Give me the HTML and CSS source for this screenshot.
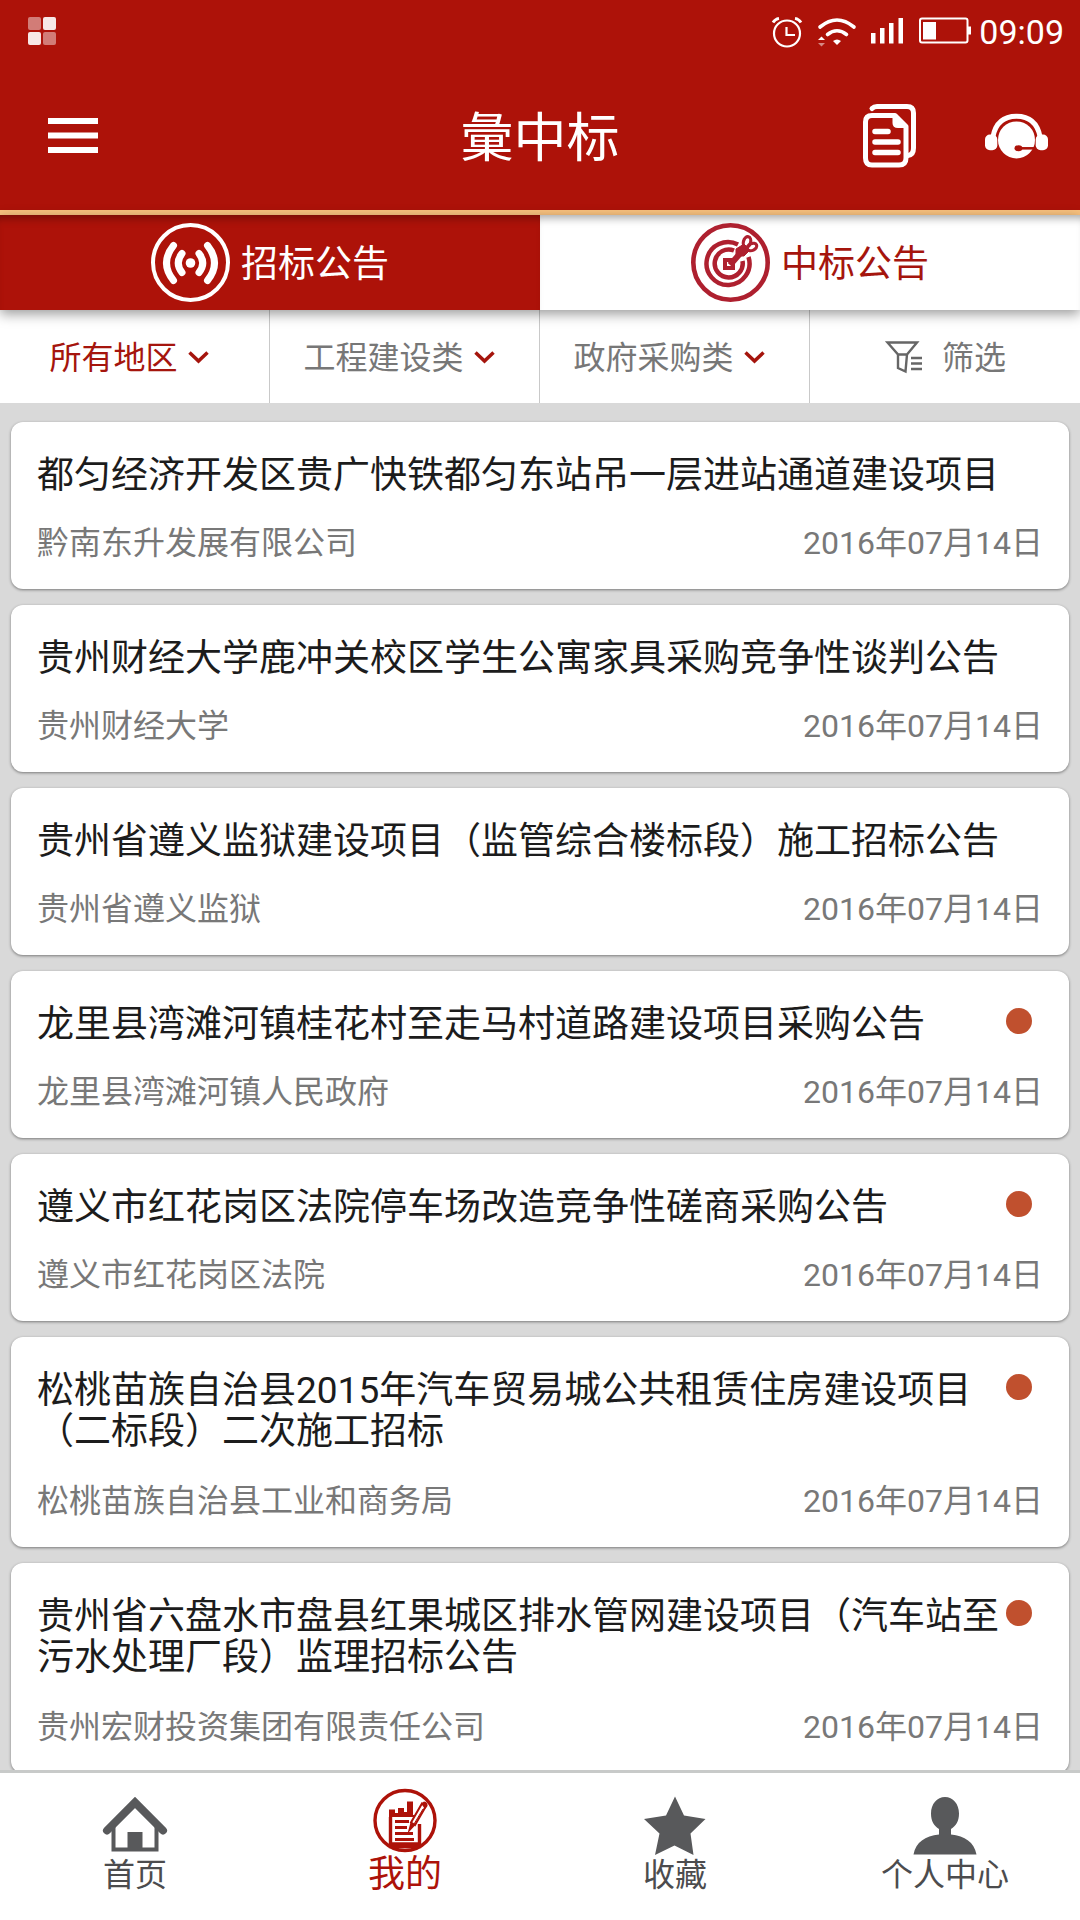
FILE: index.html
```html
<!DOCTYPE html>
<html lang="zh-CN">
<head>
  <meta charset="UTF-8">
  <meta name="viewport" content="width=device-width, initial-scale=1.0">
  <title>彙中标</title>
  <link rel="stylesheet" href="styles.css">
</head>
<body>
  <header class="header">
    <div class="status-bar">
      <svg class="status-app" width="28" height="28" viewBox="0 0 28 28" fill="#fff">
        <rect width="13" height="13" rx="2" opacity=".45"/>
        <rect x="15" width="13" height="13" rx="2" opacity=".9"/>
        <rect y="15" width="13" height="13" rx="2" opacity=".9"/>
        <rect x="15" y="15" width="13" height="13" rx="2" opacity=".45"/>
      </svg>
      <div class="status-icons">
        <svg width="30" height="31" viewBox="0 0 30 31" fill="none" stroke="#fff" stroke-width="2.200">
          <circle cx="15" cy="16.500" r="13"/>
          <path d="M14.500 10v8H23"/>
          <path d="M1 5.500Q3 2 7 1.300M29 5.500Q27 2 23 1.300" stroke-width="2.800"/>
        </svg>
        <svg width="38" height="31" viewBox="0 0 38 31" fill="none" stroke="#fff">
          <path d="M2 10Q19-4 36 10" stroke-width="3.600" stroke-linecap="round"/>
          <path d="M9.500 17.500Q19 10 28.500 17.500" stroke-width="3.600" stroke-linecap="round"/>
          <path d="M15 24q4-3 8 0l-4 4z" fill="#fff" stroke="none"/>
          <path d="M0 23l3.500-3.500L7 23z" fill="#fff" stroke="none"/>
          <path d="M0 26h7l-3.500 3.500z" fill="#fff" stroke="none" opacity=".5"/>
        </svg>
        <svg width="33" height="27" viewBox="0 0 33 27" fill="#fff">
          <path d="M0 16h4.500v10.500H0zM9 11h4.500v15.500H9zM18 6h4.500v20.500H18zM27.500 1H32v25.500h-4.500z"/>
        </svg>
        <svg width="52" height="27" viewBox="0 0 52 27">
          <rect x="1" y="1.500" width="47.500" height="24" rx="2" fill="none" stroke="#fff" stroke-width="2"/>
          <rect x="4" y="5" width="13" height="17.500" fill="#fff"/>
          <path d="M49 9.500h3v8h-3z" fill="#fff"/>
        </svg>
        <span class="status-time">09:09</span>
      </div>
    </div>
    <div class="title-bar">
      <svg class="menu" width="50" height="35" viewBox="0 0 50 35" fill="#fff">
        <path d="M0 0h50v6H0zM0 14.500h50v6H0zM0 29h50v6H0z"/>
      </svg>
      <h1>彙中标</h1>
      <div class="title-actions">
        <svg width="54" height="64" viewBox="0 0 54 64" fill="none" stroke="#fff" stroke-linecap="round" stroke-linejoin="round">
          <path d="M9 4.500Q11 2.500 14 2.500H44Q50.500 2.500 50.500 9V44Q50.500 51 45 51.500" stroke-width="5"/>
          <path d="M9 11.500H32L43 22.500V54Q43 61 36 61H9Q2.500 61 2.500 54V18Q2.500 11.500 9 11.500Z" stroke-width="5"/>
          <path d="M31 11.500V19Q31 22.500 35 22.500H43Z" fill="#fff" stroke-width="3"/>
          <path d="M12 27.500H25M12 38H35M12 48.500H35" stroke-width="5.500"/>
        </svg>
        <svg width="63" height="47" viewBox="0 0 64 47">
          <path d="M8 24Q12 3 32 3T56 24" fill="none" stroke="#fff" stroke-width="5"/>
          <circle cx="32" cy="27" r="18.800" fill="#fff"/>
          <rect x="0" y="21.500" width="12.500" height="16" rx="5" fill="#fff"/>
          <rect x="51.500" y="21.500" width="12.500" height="16" rx="5" fill="#fff"/>
          <path d="M35 35.500H52" stroke="#ad1209" stroke-width="2.600"/>
          <ellipse cx="34" cy="35.500" rx="4" ry="3" fill="#ad1209"/>
        </svg>
      </div>
    </div>
  </header>

  <nav class="tabs">
    <a class="tab active">
      <svg width="79" height="79" viewBox="0 0 79 79" fill="none" stroke="#fff" stroke-linecap="round">
        <circle cx="39.500" cy="39.500" r="37.500" stroke-width="4"/>
        <circle cx="39.500" cy="40" r="4.800" fill="#fff" stroke="none"/>
        <path d="M31 30.500Q23.500 40 31 49.500M48 30.500Q55.500 40 48 49.500" stroke-width="7"/>
        <path d="M22.500 22.500Q8.500 40 22.500 57.500M56.500 22.500Q70.500 40 56.500 57.500" stroke-width="7"/>
      </svg>
      <span>招标公告</span>
    </a>
    <a class="tab">
      <svg width="79" height="79" viewBox="0 0 79 79" fill="none" stroke="#ae202f">
        <circle cx="39.500" cy="39.500" r="37.200" stroke-width="4.600"/>
        <path d="M47 21.500A21.500 21.500 0 1 0 57.500 34" stroke-width="4.500"/>
        <path d="M43 27.500A14 14 0 1 0 51.500 38" stroke-width="4.500"/>
        <path d="M34 37H42V45H34Z" stroke-width="4"/>
        <path d="M39 42L53 26" stroke-width="6"/>
        <path d="M45 26L53 21L59 27L53 33L45 33Z" fill="#ae202f" stroke-width="1"/>
        <ellipse cx="56" cy="19" rx="3.600" ry="5.500" transform="rotate(15 56 19)" stroke-width="3.200"/>
        <ellipse cx="61" cy="24" rx="5" ry="3.400" transform="rotate(-25 61 24)" stroke-width="3.200"/>
      </svg>
      <span>中标公告</span>
    </a>
  </nav>

  <div class="filters">
    <div class="filter selected"><span>所有地区</span><svg class="arrow" width="42" height="14" viewBox="0 0 42 14"><path d="M11.500 2.500L20.500 11L29.500 2.500"/></svg></div>
    <div class="filter"><span>工程建设类</span><svg class="arrow" width="42" height="14" viewBox="0 0 42 14"><path d="M11.500 2.500L20.500 11L29.500 2.500"/></svg></div>
    <div class="filter"><span>政府采购类</span><svg class="arrow" width="42" height="14" viewBox="0 0 42 14"><path d="M11.500 2.500L20.500 11L29.500 2.500"/></svg></div>
    <div class="filter">
      <svg class="funnel" width="37" height="32" viewBox="0 0 37 32" fill="none" stroke="#666" stroke-width="2.400">
        <path d="M1.500 1.500H31L21 13.500L19.500 30.500L12 27V13.500Z M12 13.500H21"/>
        <path d="M25 17H36M25 22.500H36M25 28H36"/>
      </svg>
      <span>筛选</span>
    </div>
  </div>

  <main class="list">
    <article class="card">
      <h2>都匀经济开发区贵广快铁都匀东站吊一层进站通道建设项目</h2>
      <div class="meta"><span>黔南东升发展有限公司</span><time>2016年07月14日</time></div>
    </article>
    <article class="card">
      <h2>贵州财经大学鹿冲关校区学生公寓家具采购竞争性谈判公告</h2>
      <div class="meta"><span>贵州财经大学</span><time>2016年07月14日</time></div>
    </article>
    <article class="card">
      <h2>贵州省遵义监狱建设项目（监管综合楼标段）施工招标公告</h2>
      <div class="meta"><span>贵州省遵义监狱</span><time>2016年07月14日</time></div>
    </article>
    <article class="card unread">
      <h2>龙里县湾滩河镇桂花村至走马村道路建设项目采购公告</h2>
      <div class="meta"><span>龙里县湾滩河镇人民政府</span><time>2016年07月14日</time></div>
    </article>
    <article class="card unread">
      <h2>遵义市红花岗区法院停车场改造竞争性磋商采购公告</h2>
      <div class="meta"><span>遵义市红花岗区法院</span><time>2016年07月14日</time></div>
    </article>
    <article class="card unread two-lines">
      <h2>松桃苗族自治县2015年汽车贸易城公共租赁住房建设项目<br>（二标段）二次施工招标</h2>
      <div class="meta"><span>松桃苗族自治县工业和商务局</span><time>2016年07月14日</time></div>
    </article>
    <article class="card unread two-lines">
      <h2>贵州省六盘水市盘县红果城区排水管网建设项目（汽车站至<br>污水处理厂段）监理招标公告</h2>
      <div class="meta"><span>贵州宏财投资集团有限责任公司</span><time>2016年07月14日</time></div>
    </article>
  </main>

  <footer class="bottom-nav">
    <a class="nav-item">
      <svg width="64" height="66" viewBox="0 0 64 66">
        <path d="M10.500 40V62.500H53.500V40" fill="none" stroke="#58595b" stroke-width="4"/>
        <path d="M4 43.500L32 15.500L60 43.500" fill="none" stroke="#58595b" stroke-width="8" stroke-linecap="round"/>
        <path d="M24.500 45h15v18h-15z" fill="#58595b"/>
      </svg>
      <span>首页</span>
    </a>
    <a class="nav-item current">
      <svg width="64" height="66" viewBox="0 0 64 66" fill="none" stroke="#ad1209">
        <circle cx="32" cy="33.500" r="30" stroke-width="3.400"/>
        <path d="M17.500 30V59.500H46.500V37M18 57H46" stroke-width="3.400"/>
        <path d="M16 30V22.500H22V26H25V21H31V25H34V14.500H40V28H44V30Z" fill="#ad1209" stroke="none"/>
        <path d="M22 34.500H36M22 40.500H34M22 46.500H40M22 52.500H41" stroke-width="2.800"/>
        <path d="M49 16.500L53 19L42 38L38 35.500Z" fill="#fff" stroke-width="2"/>
        <path d="M48 16.500L51 14.500Q55 15 54.500 19L52 22ZM37.500 35.500L42 38.500L34.500 46.500Z" fill="#ad1209" stroke="none"/>
        <path d="M50 22L41 37" stroke-width="1"/>
      </svg>
      <span>我的</span>
    </a>
    <a class="nav-item">
      <svg width="64" height="66" viewBox="0 0 64 66" fill="#58595b">
        <path d="M32 9.500L41 28.500L62.500 32L47.500 46.500L50.500 68L31.500 58.500L12 68L16.500 46.500L1 32L23 28.500Z"/>
      </svg>
      <span>收藏</span>
    </a>
    <a class="nav-item">
      <svg width="64" height="66" viewBox="0 0 64 66" fill="#58595b">
        <path d="M32 10C40 10 46 17 46 26.500C46 34 43 39 38 42V47.500C52 49 61 55 63.500 67.500H.5C3 55 12 49 26 47.500V42C21 39 18 34 18 26.500C18 17 24 10 32 10Z"/>
      </svg>
      <span>个人中心</span>
    </a>
  </footer>
</body>
</html>
```

FILE: styles.css
```css
* {
  box-sizing: border-box;
}
body {
  margin: 0;
  height: 1920px;
  display: flex;
  flex-direction: column;
  overflow: hidden;
  background: #d9d9d9;
  font-family: Roboto, "Noto Sans CJK SC", sans-serif;
}
svg {
  flex-shrink: 0;
  overflow: visible;
}
.header {
  height: 215px;
  flex-shrink: 0;
  background: #ad1209;
  border-bottom: 5px solid #f9c27f;
  color: #fff;
}
.status-bar {
  height: 62px;
  display: flex;
  justify-content: space-between;
  padding: 17px 16px 0 28px;
}
.status-icons {
  display: flex;
  align-items: flex-start;
  height: 31px;
}
.status-icons svg {
  margin-right: 15px;
}
.status-icons svg:nth-child(1) {
  margin-right: 16px;
}
.status-icons svg:nth-child(4) {
  margin-right: 8px;
}
.status-time {
  font-size: 34px;
  line-height: 31px;
}
.title-bar {
  height: 148px;
  display: grid;
  grid-template-columns: 1fr auto 1fr;
  align-items: center;
  padding: 0 32px 0 48px;
}
.menu {
  margin-top: -2px;
}
.title-bar h1 {
  margin: 6px 0 0 -16px;
  font-size: 53px;
  font-weight: 400;
  line-height: 60px;
}
.title-actions {
  display: flex;
  justify-content: flex-end;
  align-items: center;
  gap: 68px;
}
.tabs {
  height: 95px;
  flex-shrink: 0;
  display: flex;
  position: relative;
  z-index: 1;
  background: #fff;
  box-shadow: 0 4px 12px rgba(0, 0, 0, 0.4);
}
.tab {
  flex: 1;
  display: flex;
  justify-content: center;
  align-items: center;
  gap: 11px;
  color: #a5150d;
  font-size: 37px;
  line-height: 44px;
  box-shadow: inset 0 9px 9px -6px rgba(0, 0, 0, 0.35);
}
.tab span {
  padding-top: 4px;
}
.tab.active {
  background: #ad1209;
  color: #fff;
}
.filters {
  height: 93px;
  flex-shrink: 0;
  display: grid;
  grid-template-columns: repeat(4, 1fr);
  background: #fff;
}
.filter {
  display: flex;
  justify-content: center;
  align-items: center;
  border-right: 1px solid #c9c9c9;
  color: #777;
  font-size: 32px;
  line-height: 38px;
}
.filter span {
  padding-top: 2px;
}
.filter:last-child {
  padding-left: 2px;
  border-right: none;
}
.filter.selected {
  color: #a5150d;
}
.arrow path {
  fill: none;
  stroke: #a5150d;
  stroke-width: 3.5;
}
.funnel {
  margin-right: 19px;
}
.list {
  flex: 1;
  min-height: 0;
  overflow: hidden;
  display: flex;
  flex-direction: column;
  gap: 16px;
  padding: 19px 11px 0;
}
.card {
  flex-shrink: 0;
  position: relative;
  padding: 33px 26px 26px;
  background: #fff;
  border-radius: 12px;
  box-shadow: 0 1px 3px rgba(0, 0, 0, 0.45);
}
.card h2 {
  margin: 0 0 28px;
  color: #1c1c1c;
  font-size: 37px;
  font-weight: 400;
  line-height: 41px;
  white-space: nowrap;
}
.card.two-lines h2 {
  margin-bottom: 30px;
}
.card.unread::after {
  content: "";
  position: absolute;
  top: 37px;
  right: 37px;
  width: 26px;
  height: 26px;
  border-radius: 50%;
  background: #c0502e;
}
.meta {
  display: flex;
  justify-content: space-between;
  color: #787878;
  font-size: 32px;
  line-height: 39px;
}
.bottom-nav {
  height: 150px;
  flex-shrink: 0;
  display: grid;
  grid-template-columns: repeat(4, 1fr);
  background: #fff;
  border-top: 3px solid #c8cac9;
}
.nav-item {
  display: flex;
  flex-direction: column;
  align-items: center;
  padding-top: 14px;
  color: #4c4c4e;
  font-size: 32px;
}
.nav-item span {
  line-height: 44px;
}
.nav-item.current {
  color: #ad1209;
  font-size: 37px;
}
```
